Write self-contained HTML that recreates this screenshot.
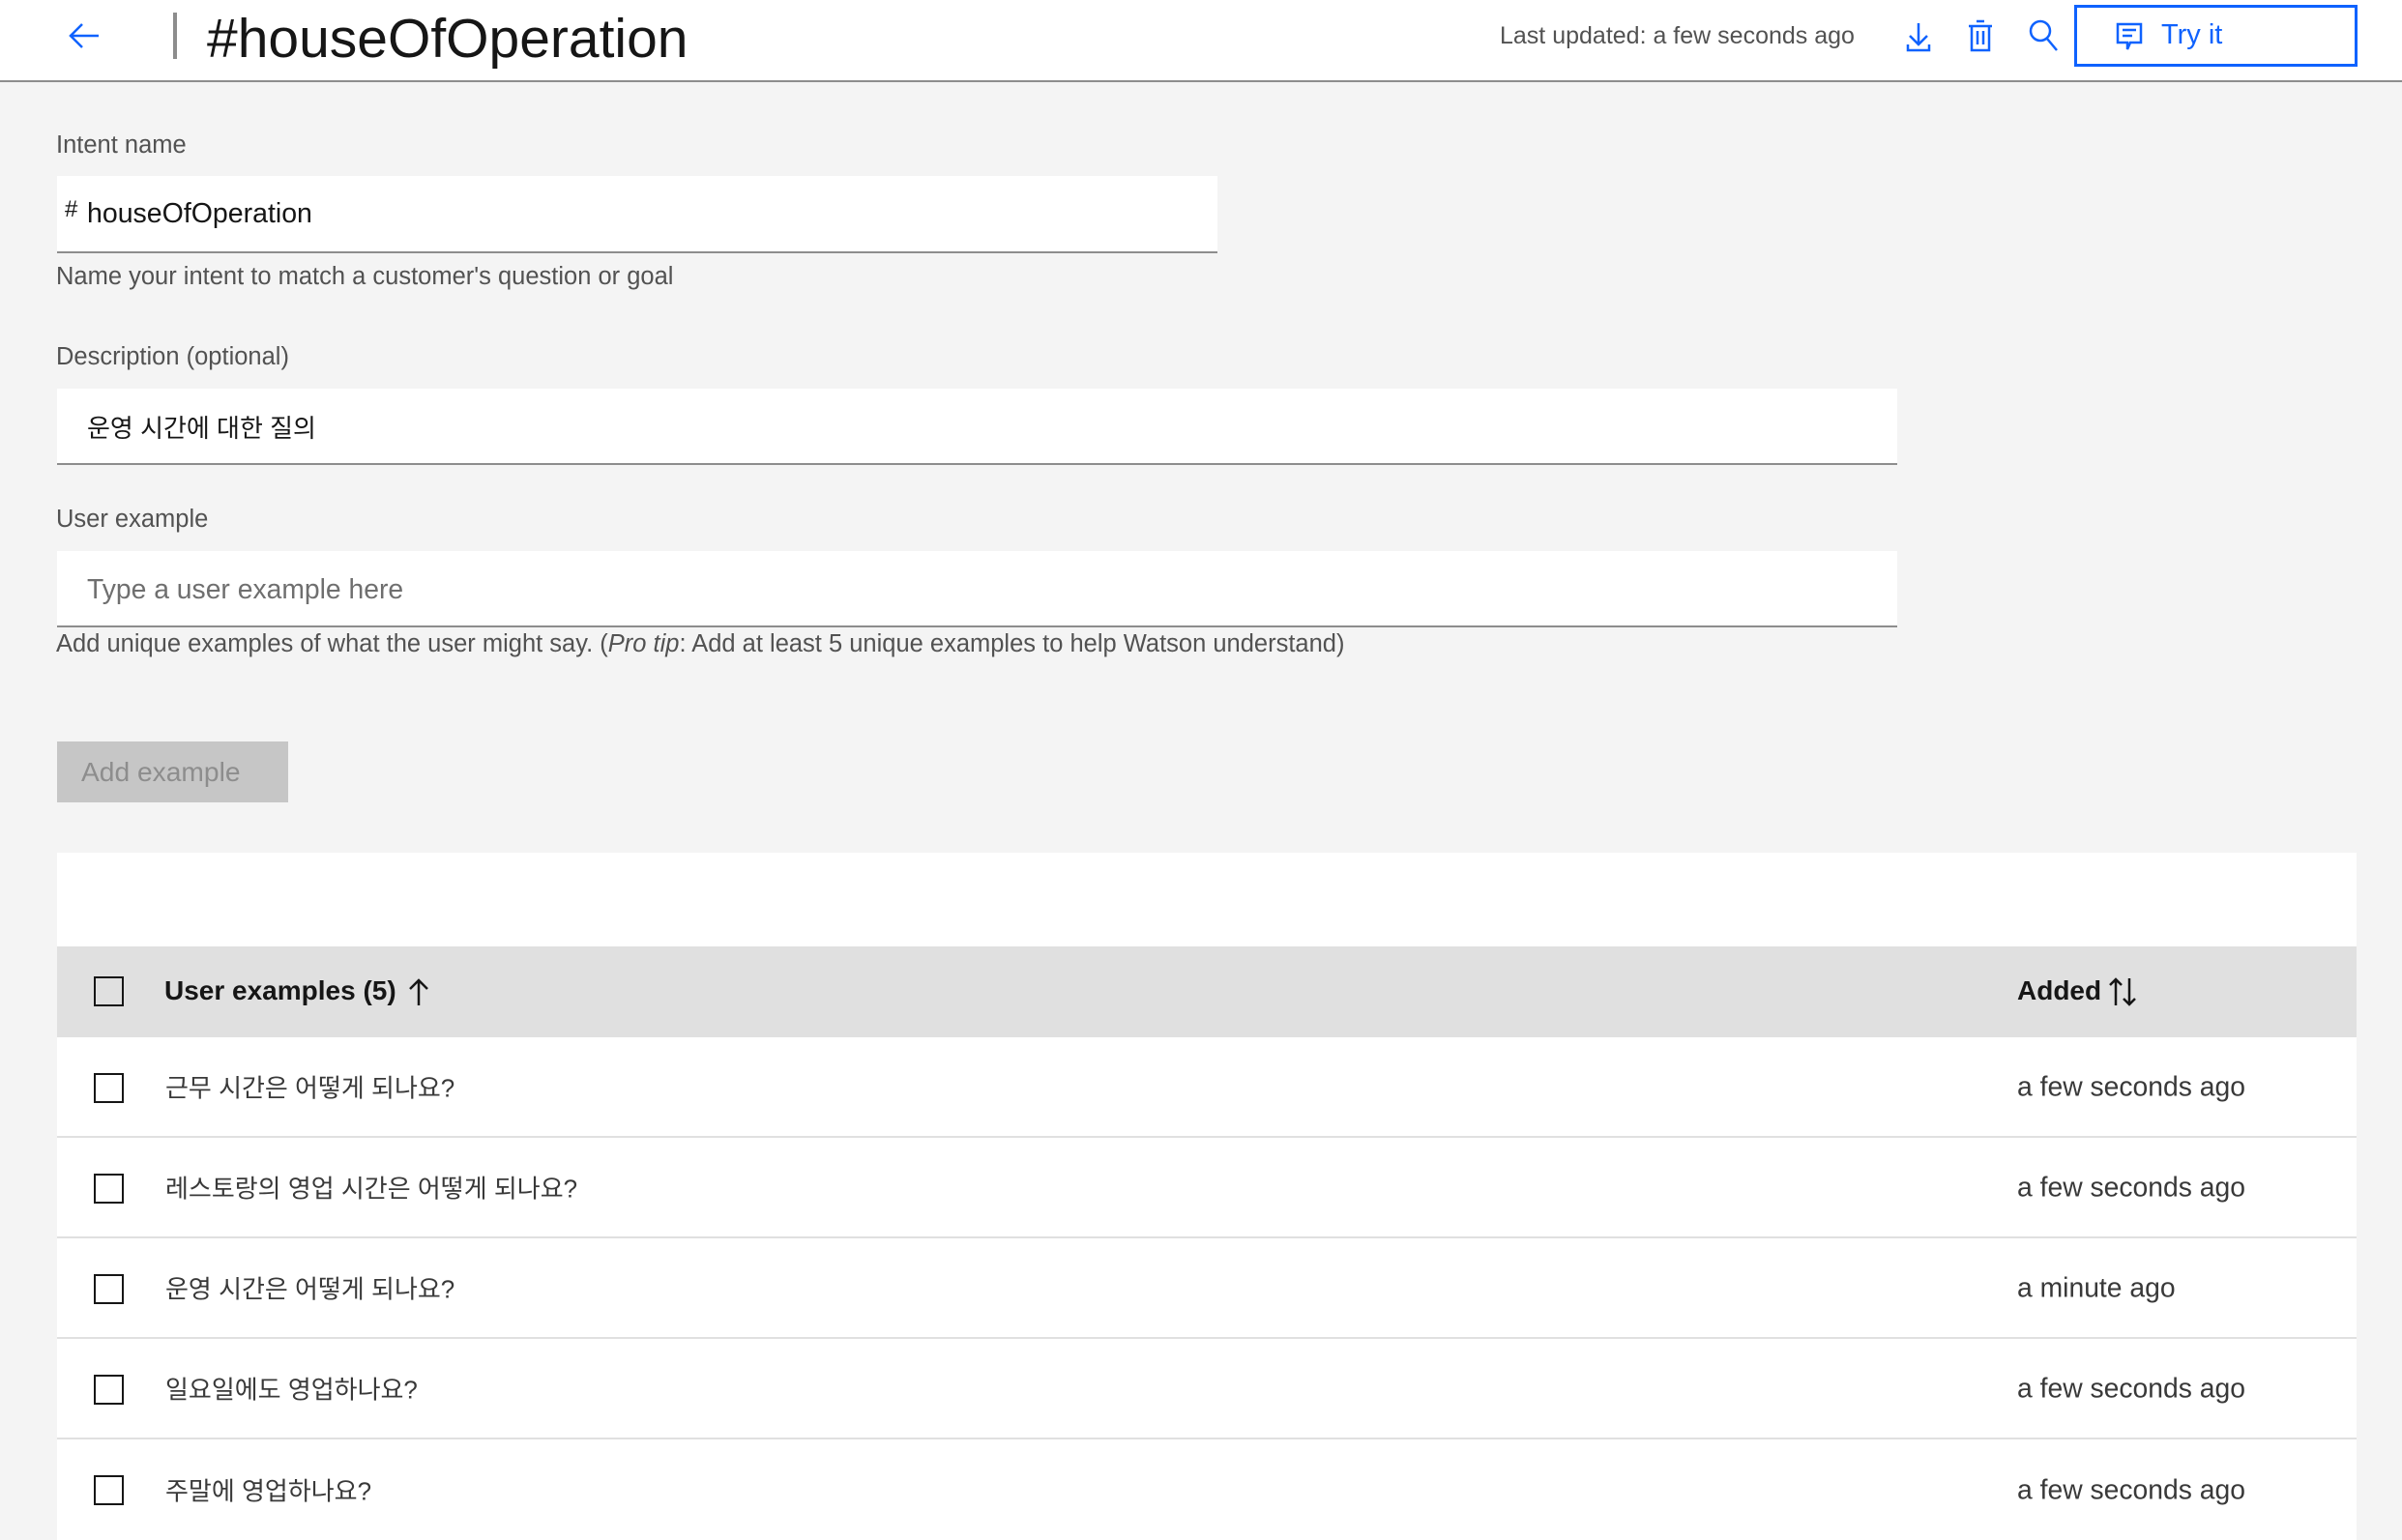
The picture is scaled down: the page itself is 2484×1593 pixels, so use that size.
<!DOCTYPE html>
<html><head><meta charset="utf-8"><style>
*{box-sizing:border-box;margin:0;padding:0}
body{width:2484px;height:1592px;overflow:hidden;background:#f4f4f4;font-family:"Liberation Sans","Noto Sans CJK KR",sans-serif;color:#161616;position:relative}
.a{position:absolute;white-space:nowrap}
.hdr{position:absolute;left:0;top:0;width:2484px;height:85px;background:#fff;border-bottom:2px solid #8d8d8d}
.lbl{font-size:25.5px;color:#525252}
.inp{position:absolute;left:59px;background:#fff;border-bottom:2px solid #8d8d8d}
.row{position:absolute;left:59px;width:2378px;height:104px;background:#fff;border-bottom:2px solid #e0e0e0}
.cb{position:absolute;left:38px;width:31px;height:31px;border:2px solid #161616}
.row .t{position:absolute;left:112px;font-size:26px;color:#393939;top:50%;transform:translateY(-50%)}
.row .d{position:absolute;left:2027px;font-size:28.3px;color:#393939;top:50%;transform:translateY(-50%)}
</style></head><body>
<div class="hdr"></div>
<svg class="a" style="left:70px;top:22px" width="34" height="30" viewBox="0 0 34 30"><path d="M32 15H4M15 3L3 15l12 12" fill="none" stroke="#0f62fe" stroke-width="2.5"/></svg>
<div class="a" style="left:179px;top:13px;width:4px;height:48px;background:#8d8d8d"></div>
<div class="a" style="left:214px;top:5px;font-size:57px;line-height:70px">#houseOfOperation</div>
<div class="a" style="left:1551px;top:23px;font-size:25px;color:#525252">Last updated: a few seconds ago</div>
<svg class="a" style="left:1970px;top:22px" width="28" height="32" viewBox="0 0 28 32"><path d="M14 2v22M5 15l9 9 9-9M3 24v6h22v-6" fill="none" stroke="#0f62fe" stroke-width="2.5"/></svg>
<svg class="a" style="left:2034px;top:20px" width="28" height="34" viewBox="0 0 28 34"><path d="M2 7h24M10 2h8M5 7v25h18V7M11 12v14M17 12v14" fill="none" stroke="#0f62fe" stroke-width="2.5"/></svg>
<svg class="a" style="left:2098px;top:20px" width="32" height="34" viewBox="0 0 32 34"><circle cx="12" cy="12" r="10" fill="none" stroke="#0f62fe" stroke-width="2.5"/><path d="M19 20l10 12" stroke="#0f62fe" stroke-width="2.5"/></svg>
<div class="a" style="left:2145px;top:5px;width:293px;height:64px;border:3px solid #0f62fe;background:#fff"></div>
<svg class="a" style="left:2187px;top:22px" width="30" height="32" viewBox="0 0 30 32"><path d="M3 3h24v19H16l-3 7v-7H3z M8 9h14M8 15h10" fill="none" stroke="#0f62fe" stroke-width="2.5"/></svg>
<div class="a" style="left:2235px;top:20px;font-size:29px;color:#0f62fe">Try it</div>

<div class="a lbl" style="left:58px;top:136px">Intent name</div>
<div class="inp" style="top:182px;width:1200px;height:80px"></div>
<div class="a" style="left:67px;top:203px;font-size:24px">#</div>
<div class="a" style="left:90px;top:205px;font-size:28.5px">houseOfOperation</div>
<div class="a lbl" style="left:58px;top:272px">Name your intent to match a customer's question or goal</div>

<div class="a lbl" style="left:58px;top:355px">Description (optional)</div>
<div class="inp" style="top:402px;width:1903px;height:79px"></div>
<div class="a" style="left:90px;top:423px;font-size:26px">운영 시간에 대한 질의</div>

<div class="a lbl" style="left:58px;top:523px">User example</div>
<div class="inp" style="top:570px;width:1903px;height:79px"></div>
<div class="a" style="left:90px;top:593px;font-size:28.3px;color:#6f6f6f">Type a user example here</div>
<div class="a lbl" style="left:58px;top:652px">Add unique examples of what the user might say. (<i>Pro tip</i>: Add at least 5 unique examples to help Watson understand)</div>

<div class="a" style="left:59px;top:767px;width:239px;height:63px;background:#c6c6c6"></div>
<div class="a" style="left:84px;top:782px;font-size:28.2px;color:#8d8d8d">Add example</div>

<div class="a" style="left:59px;top:882px;width:2378px;height:97px;background:#fff"></div>
<div class="a" style="left:59px;top:979px;width:2378px;height:94px;background:#e0e0e0"></div>
<div class="a" style="left:97px;top:1010px;width:31px;height:31px;border:2px solid #161616"></div>
<div class="a" style="left:170px;top:1009px;font-size:28px;font-weight:bold">User examples (5)</div>
<svg class="a" style="left:421px;top:1010px" width="24" height="32" viewBox="0 0 24 32"><path d="M12 30V4M3 13l9-9 9 9" fill="none" stroke="#161616" stroke-width="2.5"/></svg>
<div class="a" style="left:2086px;top:1009px;font-size:28px;font-weight:bold">Added</div>
<svg class="a" style="left:2180px;top:1010px" width="30" height="32" viewBox="0 0 30 32"><path d="M8 30V3M2 9l6-6 6 6M22 2v27M16 23l6 6 6-6" fill="none" stroke="#161616" stroke-width="2.5"/></svg>

<div class="row" style="top:1073px"><div class="cb" style="top:37px"></div><div class="t">근무 시간은 어떻게 되나요?</div><div class="d">a few seconds ago</div></div>
<div class="row" style="top:1177px"><div class="cb" style="top:37px"></div><div class="t">레스토랑의 영업 시간은 어떻게 되나요?</div><div class="d">a few seconds ago</div></div>
<div class="row" style="top:1281px"><div class="cb" style="top:37px"></div><div class="t">운영 시간은 어떻게 되나요?</div><div class="d">a minute ago</div></div>
<div class="row" style="top:1385px"><div class="cb" style="top:37px"></div><div class="t">일요일에도 영업하나요?</div><div class="d">a few seconds ago</div></div>
<div class="row" style="top:1489px;border-bottom:none"><div class="cb" style="top:37px"></div><div class="t">주말에 영업하나요?</div><div class="d">a few seconds ago</div></div>
</body></html>
